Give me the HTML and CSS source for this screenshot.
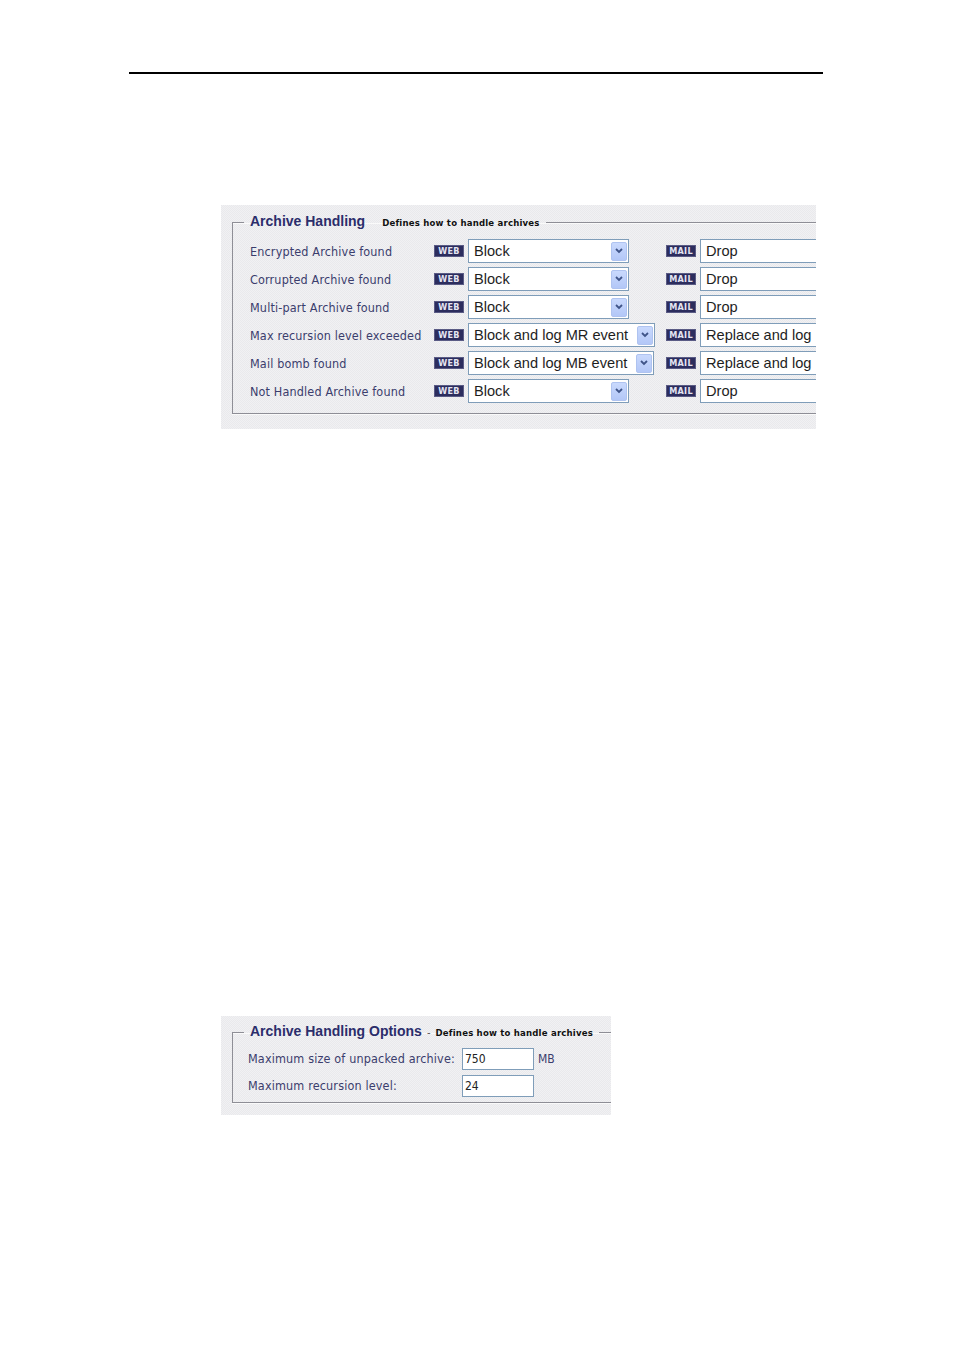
FILE: index.html
```html
<!DOCTYPE html>
<html>
<head>
<meta charset="utf-8">
<link rel="stylesheet" href="styles.css">
</head>
<body>
<div class="rule"></div>

<div class="panel panel-main">
  <fieldset class="box">
    <legend><span class="title">Archive Handling</span><span class="sub">Defines how to handle archives</span></legend>
    <div class="rows">
      <div class="row">
        <span class="label">Encrypted Archive found</span>
        <span class="badge">WEB</span>
        <div class="select"><span class="val">Block</span><span class="btn"><svg viewBox="0 0 8 6" width="8" height="6"><path d="M1 1 L4 4 L7 1" fill="none" stroke="#3f5488" stroke-width="1.8"/></svg></span></div>
        <span class="badge">MAIL</span>
        <div class="select mail"><span class="val">Drop</span></div>
      </div>
      <div class="row">
        <span class="label">Corrupted Archive found</span>
        <span class="badge">WEB</span>
        <div class="select"><span class="val">Block</span><span class="btn"><svg viewBox="0 0 8 6" width="8" height="6"><path d="M1 1 L4 4 L7 1" fill="none" stroke="#3f5488" stroke-width="1.8"/></svg></span></div>
        <span class="badge">MAIL</span>
        <div class="select mail"><span class="val">Drop</span></div>
      </div>
      <div class="row">
        <span class="label">Multi-part Archive found</span>
        <span class="badge">WEB</span>
        <div class="select"><span class="val">Block</span><span class="btn"><svg viewBox="0 0 8 6" width="8" height="6"><path d="M1 1 L4 4 L7 1" fill="none" stroke="#3f5488" stroke-width="1.8"/></svg></span></div>
        <span class="badge">MAIL</span>
        <div class="select mail"><span class="val">Drop</span></div>
      </div>
      <div class="row">
        <span class="label">Max recursion level exceeded</span>
        <span class="badge">WEB</span>
        <div class="select wide"><span class="val">Block and log MR event</span><span class="btn"><svg viewBox="0 0 8 6" width="8" height="6"><path d="M1 1 L4 4 L7 1" fill="none" stroke="#3f5488" stroke-width="1.8"/></svg></span></div>
        <span class="badge">MAIL</span>
        <div class="select mail"><span class="val">Replace and log</span></div>
      </div>
      <div class="row">
        <span class="label">Mail bomb found</span>
        <span class="badge">WEB</span>
        <div class="select wide2"><span class="val">Block and log MB event</span><span class="btn"><svg viewBox="0 0 8 6" width="8" height="6"><path d="M1 1 L4 4 L7 1" fill="none" stroke="#3f5488" stroke-width="1.8"/></svg></span></div>
        <span class="badge">MAIL</span>
        <div class="select mail"><span class="val">Replace and log</span></div>
      </div>
      <div class="row">
        <span class="label">Not Handled Archive found</span>
        <span class="badge">WEB</span>
        <div class="select"><span class="val">Block</span><span class="btn"><svg viewBox="0 0 8 6" width="8" height="6"><path d="M1 1 L4 4 L7 1" fill="none" stroke="#3f5488" stroke-width="1.8"/></svg></span></div>
        <span class="badge">MAIL</span>
        <div class="select mail"><span class="val">Drop</span></div>
      </div>
    </div>
  </fieldset>
</div>

<div class="panel panel-opts">
  <fieldset class="box box-opts">
    <legend><span class="title">Archive Handling Options</span><span class="dash">-</span><span class="sub">Defines how to handle archives</span></legend>
    <div class="opt-rows">
      <div class="opt-row">
        <span class="label">Maximum size of unpacked archive:</span>
        <span class="input">750</span>
        <span class="unit">MB</span>
      </div>
      <div class="opt-row">
        <span class="label">Maximum recursion level:</span>
        <span class="input">24</span>
      </div>
    </div>
  </fieldset>
</div>
</body>
</html>
```

FILE: styles.css
```css
html, body {
  margin: 0;
  padding: 0;
  background: #fff;
}

body {
  width: 954px;
  height: 1350px;
  overflow: hidden;
  font-family: "DejaVu Sans", Verdana, sans-serif;
}

.rule {
  margin: 72px 0 0 129px;
  width: 694px;
  height: 2px;
  background: #000;
}

.panel {
  margin-left: 221px;
  overflow: hidden;
  box-sizing: border-box;
  background-color: #ededf0;
  background-image: repeating-conic-gradient(#f1f1f3 0 25%, #e9e9ec 0 50%);
  background-size: 2px 2px;
}

.panel-main {
  margin-top: 131px;
  width: 595px;
  height: 224px;
  padding-top: 7px;
}

.panel-opts {
  margin-top: 587px;
  width: 390px;
  height: 99px;
  padding-top: 6px;
}

.box {
  margin: 0 0 0 11px;
  padding: 0 0 0 11px;
  width: 900px;
  border: none;
  border-top: 1px solid #8e8e96;
  border-left: 1px solid #8e8e96;
  border-bottom: 1px solid #8e8e96;
  box-shadow: inset 0 1px 0 #fafafa, 0 1px 0 #fafafa;
}

.box legend {
  padding: 0 6px;
  margin: 0;
  line-height: 18px;
  white-space: nowrap;
}

.title {
  font-family: "Liberation Sans", Arial, sans-serif;
  font-weight: bold;
  font-size: 14px;
  color: #2b2d6b;
}

.sub {
  font-family: "DejaVu Sans Condensed", "DejaVu Sans", sans-serif;
  font-size: 9.5px;
  font-weight: bold;
  color: #111;
  margin-left: 17px;
  letter-spacing: 0.2px;
}

.dash {
  font-family: "DejaVu Sans", sans-serif;
  font-size: 10px;
  color: #555;
  margin: 0 5px 0 5px;
}

.box-opts .sub {
  margin-left: 0;
}

.rows {
  padding: 5px 0 8px 6px;
  display: flex;
  flex-direction: column;
}

.row {
  display: grid;
  grid-template-columns: 184px 34px 198px 34px 200px;
  align-items: center;
  height: 28px;
}

.label {
  font-family: "DejaVu Sans Condensed", "DejaVu Sans", sans-serif;
  font-size: 12.5px;
  letter-spacing: 0.15px;
  color: #3b3d6d;
  white-space: nowrap;
}

.badge {
  display: inline-flex;
  align-items: center;
  justify-content: center;
  width: 30px;
  height: 12px;
  box-sizing: border-box;
  background: #2c2d5e;
  color: #e4e4f2;
  font-family: "DejaVu Sans Condensed", "DejaVu Sans", sans-serif;
  font-size: 9px;
  font-weight: bold;
  letter-spacing: 0.3px;
  line-height: 12px;
  border: 1px solid #5a5b85;
}

.select {
  display: flex;
  align-items: center;
  justify-content: space-between;
  box-sizing: border-box;
  width: 161px;
  height: 24px;
  background: #fff;
  border: 1px solid #7f9db9;
  padding: 0 1px 0 5px;
}

.select.wide {
  width: 187px;
}

.select.wide2 {
  width: 186px;
}

.select.mail {
  width: 170px;
}

.val {
  font-family: "Liberation Sans", Arial, sans-serif;
  font-size: 14.6px;
  color: #1e1e1e;
  white-space: nowrap;
}

.btn {
  display: flex;
  align-items: center;
  justify-content: center;
  width: 16px;
  height: 19px;
  box-sizing: border-box;
  background: linear-gradient(#c9d9fd, #b3c7f7);
  border: 1px solid #afc3f0;
  border-radius: 2px;
}

.opt-rows {
  padding: 3px 0 3px 4px;
  display: flex;
  flex-direction: column;
}

.opt-row {
  display: flex;
  align-items: center;
  height: 27px;
}

.opt-row .label {
  width: 214px;
}

.input {
  display: flex;
  align-items: center;
  box-sizing: border-box;
  width: 72px;
  height: 22px;
  background: #fff;
  border: 1px solid #7f9db9;
  padding: 0 2px;
  font-family: "DejaVu Sans Condensed", "DejaVu Sans", sans-serif;
  font-size: 12px;
  color: #222;
}

.unit {
  margin-left: 4px;
  font-family: "DejaVu Sans Condensed", "DejaVu Sans", sans-serif;
  font-size: 12px;
  color: #3b3d6d;
}
```
